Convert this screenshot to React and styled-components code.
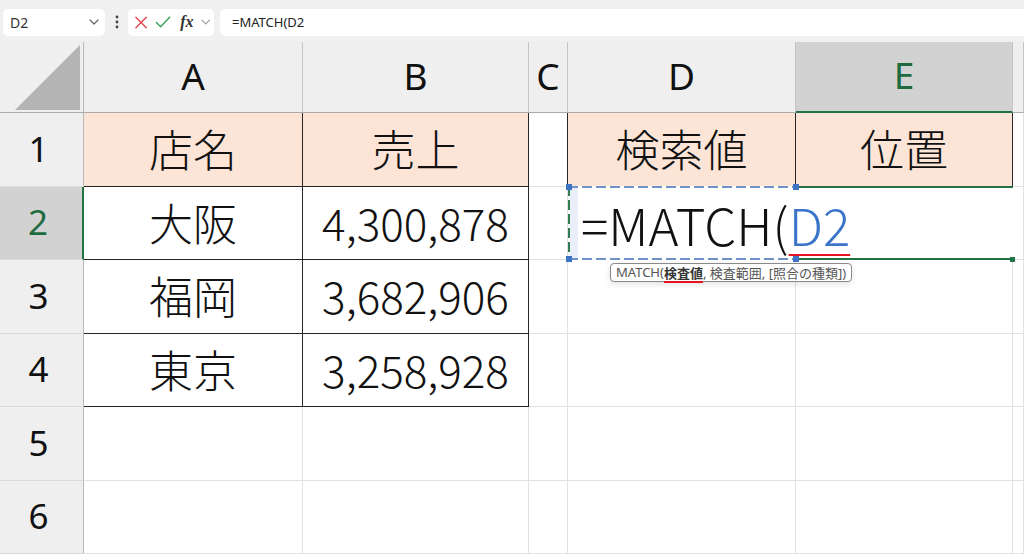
import React from "react";
import styled, { createGlobalStyle } from "styled-components";

const GlobalStyle = createGlobalStyle`
  html, body {
    margin: 0;
    padding: 0;
    background: #ffffff;
    overflow: hidden;
  }
  * {
    box-sizing: border-box;
  }
`;

const COLS = [84, 219, 226, 39, 228, 217];
const GRID_LINE = "#e1e1e1";
const DARK = "#262626";
const PEACH = "#fce4d6";
const GREEN = "#217346";

const Page = styled.div`
  width: 1024px;
  height: 555px;
  overflow: hidden;
  background: #fff;
  font-family: "Noto Sans", "Noto Sans CJK JP", sans-serif;
`;

const Toolbar = styled.div`
  height: 42px;
  background: #f0f0f0;
  display: flex;
  align-items: center;
  padding: 0 0 0 3px;
`;

const Box = styled.div`
  height: 27px;
  background: #fff;
  border-radius: 5px;
  display: flex;
  align-items: center;
  margin-top: 2px;
`;

const NameBox = styled(Box)`
  width: 102px;
  padding: 0 6px 0 7px;
  justify-content: space-between;
  font-size: 14px;
  color: #333;
`;

const Dots = styled.div`
  width: 23px;
  display: flex;
  justify-content: center;
  margin-top: 2px;
`;

const IconBox = styled(Box)`
  width: 86px;
  padding: 0 4px 0 6px;
  gap: 7px;
`;

const Fx = styled.span`
  font-family: "Liberation Serif", serif;
  font-style: italic;
  font-weight: bold;
  font-size: 16px;
  color: #333;
  margin-left: 2px;
`;

const FormulaBox = styled(Box)`
  flex: 1;
  margin-left: 6px;
  padding-left: 12px;
  font-size: 13px;
  color: #222;
  border-radius: 5px 0 0 5px;
`;

const Sheet = styled.div`
  display: grid;
  grid-template-columns: ${COLS.map((w) => `${w}px`).join(" ")} 1fr;
  grid-template-rows: 71px repeat(6, 73.5px);
`;

const Corner = styled.div`
  background: #efefef;
  border-right: 1px solid #b9b9b9;
  border-bottom: 1px solid #ababab;
  display: flex;
  align-items: flex-end;
  justify-content: flex-end;
  padding: 0 3px 2px 0;
`;

const ColHead = styled.div`
  background: ${(p) => (p.$active ? "#d2d2d2" : "#efefef")};
  color: ${(p) => (p.$active ? "#1e6b3f" : "#111")};
  border-right: 1px solid #c6c6c6;
  border-bottom: ${(p) => (p.$active ? `2px solid ${GREEN}` : "1px solid #ababab")};
  display: flex;
  align-items: center;
  justify-content: center;
  font-size: 37px;
  padding-bottom: 4px;
`;

const RowHead = styled.div`
  background: ${(p) => (p.$active ? "#d2d2d2" : "#efefef")};
  color: ${(p) => (p.$active ? "#1e6b3f" : "#111")};
  border-right: ${(p) => (p.$active ? `2px solid ${GREEN}` : "1px solid #b9b9b9")};
  border-bottom: 1px solid #dadada;
  display: flex;
  align-items: center;
  justify-content: center;
  font-size: 35px;
  padding: 0 6px 2px 0;
`;

const Cell = styled.div`
  background: ${(p) => p.$bg || "#fff"};
  border-right: 1px solid ${(p) => (p.$right ? DARK : GRID_LINE)};
  border-bottom: 1px solid ${(p) => (p.$bottom ? DARK : GRID_LINE)};
  display: flex;
  align-items: center;
  justify-content: center;
  font-family: "Noto Sans CJK JP", sans-serif;
  font-weight: 300;
  font-size: 44px;
  color: #111;
  padding-bottom: 2px;
`;

const Editor = styled.div`
  grid-column: span 2;
  position: relative;
  background: #fff;
  border-top: 2px solid ${GREEN};
  border-bottom: 2px solid ${GREEN};
  margin-top: -1px;
  display: flex;
  align-items: center;
  padding: 2px 0 0 13px;
  font-family: "Noto Sans CJK JP", sans-serif;
  font-weight: 300;
  font-size: 51px;
  color: #111;
  &::before {
    content: "";
    position: absolute;
    left: 2px;
    top: 0;
    bottom: 0;
    width: 8px;
    background: #e9eef8;
  }
`;

const EndHandle = styled.span`
  position: absolute;
  right: -2px;
  bottom: -4px;
  width: 5px;
  height: 5px;
  background: ${GREEN};
`;

const RefBox = styled.div`
  position: absolute;
  left: 0;
  top: -2px;
  bottom: -2px;
  width: 228px;
  pointer-events: none;
  background:
    repeating-linear-gradient(90deg, #6f93c9 0 10px, #fff 10px 14px) top left / 100% 2px no-repeat,
    repeating-linear-gradient(90deg, #6f93c9 0 10px, #fff 10px 14px) bottom left / 100% 2px no-repeat,
    repeating-linear-gradient(180deg, #2e7d4f 0 10px, #fff 10px 14px) top left / 2px 100% no-repeat;
`;

const Handle = styled.span`
  position: absolute;
  width: 6px;
  height: 6px;
  background: #3f73c8;
  left: ${(p) => (p.$x === "r" ? "225px" : "-2px")};
  top: ${(p) => (p.$y === "b" ? "auto" : "-2px")};
  bottom: ${(p) => (p.$y === "b" ? "-2px" : "auto")};
`;

const Ref = styled.span`
  color: #3a74c9;
  text-decoration: underline;
  text-decoration-color: #e3141e;
  text-decoration-thickness: 2px;
  text-underline-offset: 8px;
`;

const Tip = styled.div`
  position: absolute;
  left: 42px;
  top: 75px;
  height: 19px;
  padding: 0 5px;
  border: 1px solid #8a8a8a;
  border-radius: 4px;
  background: #fff;
  box-shadow: 0 2px 6px rgba(0, 0, 0, 0.12);
  display: flex;
  align-items: center;
  white-space: nowrap;
  font-family: "Noto Sans", "Noto Sans CJK JP", sans-serif;
  font-weight: 400;
  font-size: 13px;
  color: #555;
  z-index: 2;
`;

const TipArg = styled.b`
  color: #333;
  text-decoration: underline;
  text-decoration-color: #e3141e;
  text-decoration-thickness: 2px;
  text-underline-offset: 3px;
`;

const Chevron = ({ color = "#666", size = 10 }) => (
  <svg width={size} height={size * 0.6} viewBox="0 0 10 6" fill="none">
    <path d="M1 1l4 4 4-4" stroke={color} strokeWidth="1.2" strokeLinecap="round" strokeLinejoin="round" />
  </svg>
);

const headers = ["A", "B", "C", "D", "E", ""];

const data = [
  ["店名", "売上", "", "検索値", "位置", ""],
  ["大阪", "4,300,878", "", null, null, ""],
  ["福岡", "3,682,906", "", "", "", ""],
  ["東京", "3,258,928", "", "", "", ""],
  ["", "", "", "", "", ""],
  ["", "", "", "", "", ""],
];

const cellProps = (r, c) => {
  const inTable = c <= 1 && r <= 3;
  const inHead = r === 0 && (c === 3 || c === 4);
  return {
    $bg: r === 0 && c !== 2 && c !== 5 ? PEACH : undefined,
    $right: inTable || inHead || (r === 0 && c === 2),
    $bottom: inTable || inHead,
  };
};

export default function App() {
  return (
    <Page>
      <GlobalStyle />
      <Toolbar>
        <NameBox>
          <span>D2</span>
          <Chevron />
        </NameBox>
        <Dots>
          <svg width="4" height="14" viewBox="0 0 4 14">
            <circle cx="2" cy="2" r="1.4" fill="#444" />
            <circle cx="2" cy="7" r="1.4" fill="#444" />
            <circle cx="2" cy="12" r="1.4" fill="#444" />
          </svg>
        </Dots>
        <IconBox>
          <svg width="15" height="15" viewBox="0 0 15 15">
            <path d="M2 2l11 11M13 2L2 13" stroke="#e5484d" strokeWidth="1.5" strokeLinecap="round" />
          </svg>
          <svg width="17" height="14" viewBox="0 0 17 14">
            <path d="M1.5 7.5l4.5 4.5L15.5 2" stroke="#3aa35b" strokeWidth="1.5" fill="none" strokeLinecap="round" strokeLinejoin="round" />
          </svg>
          <Fx>fx</Fx>
          <Chevron color="#999" />
        </IconBox>
        <FormulaBox>=MATCH(D2</FormulaBox>
      </Toolbar>

      <Sheet>
        <Corner>
          <svg width="65" height="65" viewBox="0 0 65 65">
            <path d="M0 65L65 0V65Z" fill="#b4b4b4" />
          </svg>
        </Corner>
        {headers.map((h, i) => (
          <ColHead key={i} $active={h === "E"}>
            {h}
          </ColHead>
        ))}

        {data.map((row, r) => (
          <React.Fragment key={r}>
            <RowHead $active={r === 1}>{r + 1}</RowHead>
            {row.map((v, c) => {
              if (r === 1 && c === 4) return null;
              if (r === 1 && c === 3) {
                return (
                  <Editor key={c}>
                    <RefBox>
                      <Handle />
                      <Handle $x="r" />
                      <Handle $y="b" />
                      <Handle $x="r" $y="b" />
                    </RefBox>
                    <span>
                      =MATCH(<Ref>D2</Ref>
                    </span>
                    <EndHandle />
                    <Tip>
                      MATCH(<TipArg>検査値</TipArg>, 検査範囲, [照合の種類])
                    </Tip>
                  </Editor>
                );
              }
              return (
                <Cell key={c} {...cellProps(r, c)}>
                  {v}
                </Cell>
              );
            })}
          </React.Fragment>
        ))}
      </Sheet>
    </Page>
  );
}
